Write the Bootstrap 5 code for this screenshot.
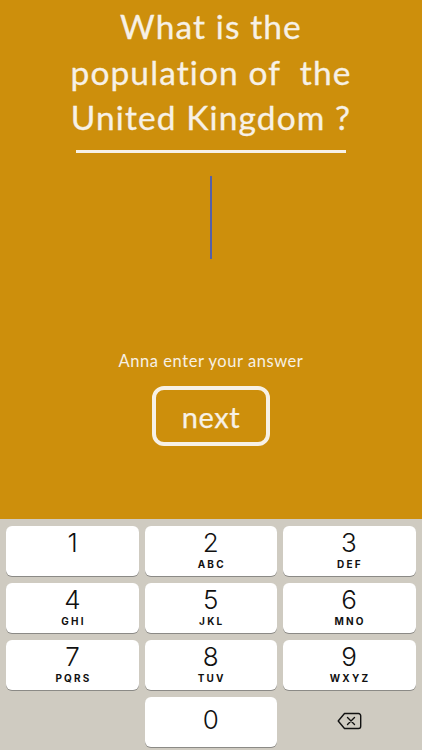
<!DOCTYPE html>
<html lang="en">
<head>
<meta charset="utf-8">
<title>Quiz</title>
<link href="https://cdn.jsdelivr.net/npm/bootstrap@5.3.0/dist/css/bootstrap.min.css" rel="stylesheet">
<style>
html,body{height:100%;margin:0;}
body{width:422px;height:750px;overflow:hidden;background:#cd8f0c;font-family:"Lato","Liberation Sans",sans-serif;}
.screen{height:750px;}
.quiz{height:519px;background:#cd8f0c;color:#f7f1e6;}
.question{font-family:"Lato",sans-serif;font-size:33.5px;line-height:45.5px;letter-spacing:1.1px;font-weight:400;margin:4px 0 0;white-space:pre;text-align:center;-webkit-text-stroke:.3px #f7f1e6;}
.rule{width:270px;height:3px;background:#f7f1e6;margin-top:9px;}
.caret-line{width:2px;height:83px;background:#5560a8;margin:23px 0 0 0;}
.prompt{font-size:16.5px;letter-spacing:.55px;line-height:20px;margin-top:92px;}
.next-btn{width:118px;height:60px;margin-top:15px;border:4px solid #f7f1e6;border-radius:12px;background:transparent;color:#f7f1e6;font-size:29px;line-height:1;letter-spacing:.6px;padding:2px 0 0;-webkit-text-stroke:.25px #f7f1e6;}
.keypad{height:231px;background:#cfcbc1;padding:7px 6px 4px;display:grid;grid-template-columns:133px 132.5px 133px;grid-auto-rows:49.5px;column-gap:5.5px;row-gap:7.6px;font-family:"Inter","Liberation Sans",sans-serif;}
.tap{background:#fff;border-radius:6px;box-shadow:0 1px 0 #8b8a86;color:#111;display:flex;flex-direction:column;align-items:center;padding-top:2px;}
.digit{font-size:26px;line-height:30px;font-weight:300;}
.letters{font-size:10px;line-height:12px;font-weight:700;letter-spacing:2.2px;margin-right:-2px;}
.single{padding-top:8px;}
.blank{background:transparent;}
.del{display:flex;align-items:center;justify-content:center;padding-top:0;padding-bottom:2px;}
</style>
</head>
<body>
<main class="screen d-flex flex-column">
  <section class="quiz d-flex flex-column align-items-center">
    <h1 class="question">What is the
population of  the
United Kingdom ?</h1>
    <div class="rule"></div>
    <div class="caret-line"></div>
    <div class="prompt">Anna enter your answer</div>
    <button type="button" class="btn next-btn">next</button>
  </section>
  <section class="keypad">
    <div class="tap"><span class="digit">1</span></div>
    <div class="tap"><span class="digit">2</span><span class="letters">ABC</span></div>
    <div class="tap"><span class="digit">3</span><span class="letters">DEF</span></div>
    <div class="tap"><span class="digit">4</span><span class="letters">GHI</span></div>
    <div class="tap"><span class="digit">5</span><span class="letters">JKL</span></div>
    <div class="tap"><span class="digit">6</span><span class="letters">MNO</span></div>
    <div class="tap"><span class="digit">7</span><span class="letters">PQRS</span></div>
    <div class="tap"><span class="digit">8</span><span class="letters">TUV</span></div>
    <div class="tap"><span class="digit">9</span><span class="letters">WXYZ</span></div>
    <div class="blank"></div>
    <div class="tap single"><span class="digit">0</span></div>
    <div class="del">
      <svg width="25" height="18" viewBox="0 0 25 18" fill="none" stroke="#111" stroke-width="1.4" stroke-linejoin="round" stroke-linecap="round" aria-label="delete"><path d="M7.5 1.5H21.5a2.2 2.2 0 0 1 2.2 2.2V14.3a2.2 2.2 0 0 1-2.2 2.2H7.5L1.2 9Z"/><path d="M10.5 5.5l7 7M17.5 5.5l-7 7"/></svg>
    </div>
  </section>
</main>
<script src="https://cdn.jsdelivr.net/npm/bootstrap@5.3.0/dist/js/bootstrap.bundle.min.js"></script>
</body>
</html>
